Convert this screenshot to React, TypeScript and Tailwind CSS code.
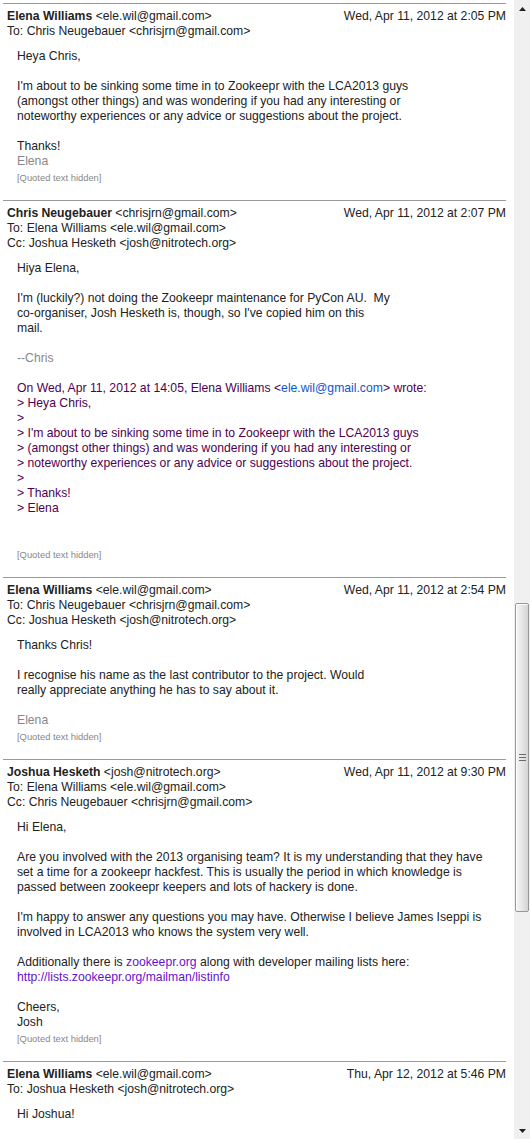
import React from 'react';

interface Message {
  from: string;
  fromEmail: string;
  date: string;
  to: string;
  cc?: string;
  body: React.ReactNode;
}

const Lines: React.FC<{ lines: string[]; className?: string }> = ({ lines, className }) => (
  <div className={className}>
    {lines.map((l, i) => (
      <div key={i} className="h-[15px] whitespace-pre">
        {l === '' ? '\u00a0' : l}
      </div>
    ))}
  </div>
);

const Sig: React.FC<{ text: string }> = ({ text }) => (
  <div className="h-[15px] text-[#888]">{text}</div>
);

const Blank = () => <div className="h-[15px]" />;

const QuotedHidden = () => (
  <div className="mt-[3px] h-[12px] text-[9.4px] leading-[12px] text-[#888]">[Quoted text hidden]</div>
);

const messages: Message[] = [
  {
    from: 'Elena Williams',
    fromEmail: 'ele.wil@gmail.com',
    date: 'Wed, Apr 11, 2012 at 2:05 PM',
    to: 'Chris Neugebauer <chrisjrn@gmail.com>',
    body: (
      <>
        <Lines
          lines={[
            'Heya Chris,',
            '',
            "I'm about to be sinking some time in to Zookeepr with the LCA2013 guys",
            '(amongst other things) and was wondering if you had any interesting or',
            'noteworthy experiences or any advice or suggestions about the project.',
            '',
            'Thanks!',
          ]}
        />
        <Sig text="Elena" />
      </>
    ),
  },
  {
    from: 'Chris Neugebauer',
    fromEmail: 'chrisjrn@gmail.com',
    date: 'Wed, Apr 11, 2012 at 2:07 PM',
    to: 'Elena Williams <ele.wil@gmail.com>',
    cc: 'Joshua Hesketh <josh@nitrotech.org>',
    body: (
      <>
        <Lines
          lines={[
            'Hiya Elena,',
            '',
            "I'm (luckily?) not doing the Zookeepr maintenance for PyCon AU.  My",
            "co-organiser, Josh Hesketh is, though, so I've copied him on this",
            'mail.',
            '',
          ]}
        />
        <Sig text="--Chris" />
        <Blank />
        <div className="text-[#500050]">
          <div className="h-[15px] whitespace-pre">
            On Wed, Apr 11, 2012 at 14:05, Elena Williams &lt;
            <span className="text-[#1155cc]">ele.wil@gmail.com</span>&gt; wrote:
          </div>
          <Lines
            lines={[
              '> Heya Chris,',
              '>',
              "> I'm about to be sinking some time in to Zookeepr with the LCA2013 guys",
              '> (amongst other things) and was wondering if you had any interesting or',
              '> noteworthy experiences or any advice or suggestions about the project.',
              '>',
              '> Thanks!',
              '> Elena',
            ]}
          />
        </div>
        <Blank />
        <Blank />
      </>
    ),
  },
  {
    from: 'Elena Williams',
    fromEmail: 'ele.wil@gmail.com',
    date: 'Wed, Apr 11, 2012 at 2:54 PM',
    to: 'Chris Neugebauer <chrisjrn@gmail.com>',
    cc: 'Joshua Hesketh <josh@nitrotech.org>',
    body: (
      <>
        <Lines
          lines={[
            'Thanks Chris!',
            '',
            'I recognise his name as the last contributor to the project. Would',
            'really appreciate anything he has to say about it.',
            '',
          ]}
        />
        <Sig text="Elena" />
      </>
    ),
  },
  {
    from: 'Joshua Hesketh',
    fromEmail: 'josh@nitrotech.org',
    date: 'Wed, Apr 11, 2012 at 9:30 PM',
    to: 'Elena Williams <ele.wil@gmail.com>',
    cc: 'Chris Neugebauer <chrisjrn@gmail.com>',
    body: (
      <>
        <Lines
          lines={[
            'Hi Elena,',
            '',
            'Are you involved with the 2013 organising team? It is my understanding that they have',
            'set a time for a zookeepr hackfest. This is usually the period in which knowledge is',
            'passed between zookeepr keepers and lots of hackery is done.',
            '',
            "I'm happy to answer any questions you may have. Otherwise I believe James Iseppi is",
            'involved in LCA2013 who knows the system very well.',
            '',
          ]}
        />
        <div className="h-[15px] whitespace-pre">
          Additionally there is <span className="text-[#6611cc]">zookeepr.org</span> along with developer mailing lists here:
        </div>
        <div className="h-[15px] text-[#6611cc]">http://lists.zookeepr.org/mailman/listinfo</div>
        <Lines lines={['', 'Cheers,', 'Josh']} />
      </>
    ),
  },
  {
    from: 'Elena Williams',
    fromEmail: 'ele.wil@gmail.com',
    date: 'Thu, Apr 12, 2012 at 5:46 PM',
    to: 'Joshua Hesketh <josh@nitrotech.org>',
    body: <Lines lines={['Hi Joshua!', '', '']} />,
  },
];

const MessageBlock: React.FC<{ m: Message; last?: boolean }> = ({ m, last }) => (
  <div className="border-t border-[#9a9a9a] pt-[5px] pb-[16px]">
    <div className="pl-[4px]">
      <div className="flex h-[15px] justify-between">
        <div className="whitespace-pre">
          <span className="font-bold">{m.from}</span> &lt;{m.fromEmail}&gt;
        </div>
        <div className="whitespace-pre">{m.date}</div>
      </div>
      <div className="h-[15px] whitespace-pre">To: {m.to}</div>
      {m.cc && <div className="h-[15px] whitespace-pre">Cc: {m.cc}</div>}
    </div>
    <div className="mt-[10px] pl-[14px]">
      {m.body}
      {!last && <QuotedHidden />}
    </div>
  </div>
);

const Scrollbar = () => (
  <div className="flex h-full w-[16px] flex-col bg-[#f0f0f0]">
    <div className="flex h-[17px] items-center justify-center">
      <svg width="7" height="4" viewBox="0 0 7 4">
        <path d="M3.5 0 L7 4 L0 4 Z" fill="#222" />
      </svg>
    </div>
    <div className="h-[586px]" />
    <div className="mx-[1px] flex h-[309px] items-center justify-center rounded-[2px] border border-[#979797] bg-gradient-to-r from-[#f4f4f4] via-[#e6e6e6] to-[#d4d4d4] shadow-[inset_1px_1px_0_#fff]">
      <svg width="7" height="7" viewBox="0 0 7 7">
        <path d="M0 0.5 H7 M0 3.5 H7 M0 6.5 H7" stroke="#6a6a6a" strokeWidth="1" />
      </svg>
    </div>
    <div className="flex-1" />
    <div className="flex h-[17px] items-center justify-center">
      <svg width="7" height="4" viewBox="0 0 7 4">
        <path d="M0 0 L7 0 L3.5 4 Z" fill="#222" />
      </svg>
    </div>
  </div>
);

export default function App() {
  return (
    <div className="flex h-[1139px] w-[530px] overflow-hidden bg-white font-['Liberation_Sans',Arial,sans-serif] text-[12.2px] leading-[15px] text-[#222]">
      <div className="w-[514px] overflow-hidden pt-[3px]">
        <div className="ml-[3px] w-[503px]">
          {messages.map((m, i) => (
            <MessageBlock key={i} m={m} last={i === messages.length - 1} />
          ))}
        </div>
      </div>
      <Scrollbar />
    </div>
  );
}
